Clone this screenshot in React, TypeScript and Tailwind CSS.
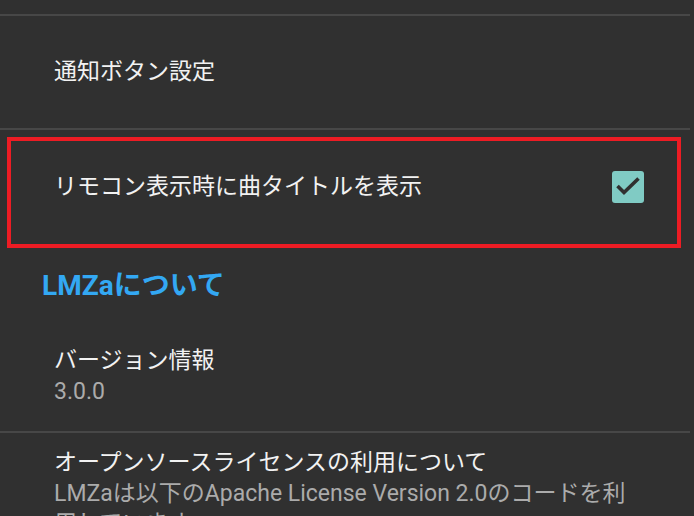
export default function App() {
  return (
    <div
      className="relative h-[516px] w-full overflow-hidden bg-[#303030] text-[#f2f2f2]"
      style={{ fontFamily: "Roboto, 'Noto Sans CJK JP', sans-serif" }}
    >
      <div className="h-[14px]" />
      <div className="mr-[4px] h-[2px] bg-[#474747]" />
      <div className="flex h-[112px] items-center pl-[54px] text-[23px]">通知ボタン設定</div>
      <div className="mr-[4px] h-[2px] bg-[#474747]" />
      <div className="flex h-[114px] items-center justify-between pl-[54px] pr-[50px] text-[23px]">
        <span>リモコン表示時に曲タイトルを表示</span>
        <svg width="32" height="32" viewBox="0 0 32 32">
          <rect width="32" height="32" rx="3" fill="#80cbc4" />
          <polyline
            points="5.5,15 12,21.5 26.5,7.5"
            fill="none"
            stroke="#303030"
            strokeWidth="3.6"
          />
        </svg>
      </div>
      <div className="pl-[42px] pt-[26px] text-[28px] font-bold leading-[32px] text-[#33a8f3]">LMZaについて</div>
      <div className="pl-[54px] pt-[43px]">
        <div className="text-[23px] leading-[32px]">バージョン情報</div>
        <div className="text-[23px] leading-[30px] text-[#ababab]">3.0.0</div>
      </div>
      <div className="mt-[24px] mr-[4px] h-[2px] bg-[#474747]" />
      <div className="pl-[54px] pr-[56px] pt-[14px]">
        <div className="text-[23px] leading-[32px]">オープンソースライセンスの利用について</div>
        <div className="text-[23px] leading-[30px] text-[#ababab]">
          LMZaは以下のApache License Version 2.0のコードを利用しています。
        </div>
      </div>
      <div className="absolute left-[7px] top-[137px] h-[111px] w-[674px] border-[4px] border-[#ed1c24]" />
    </div>
  );
}
